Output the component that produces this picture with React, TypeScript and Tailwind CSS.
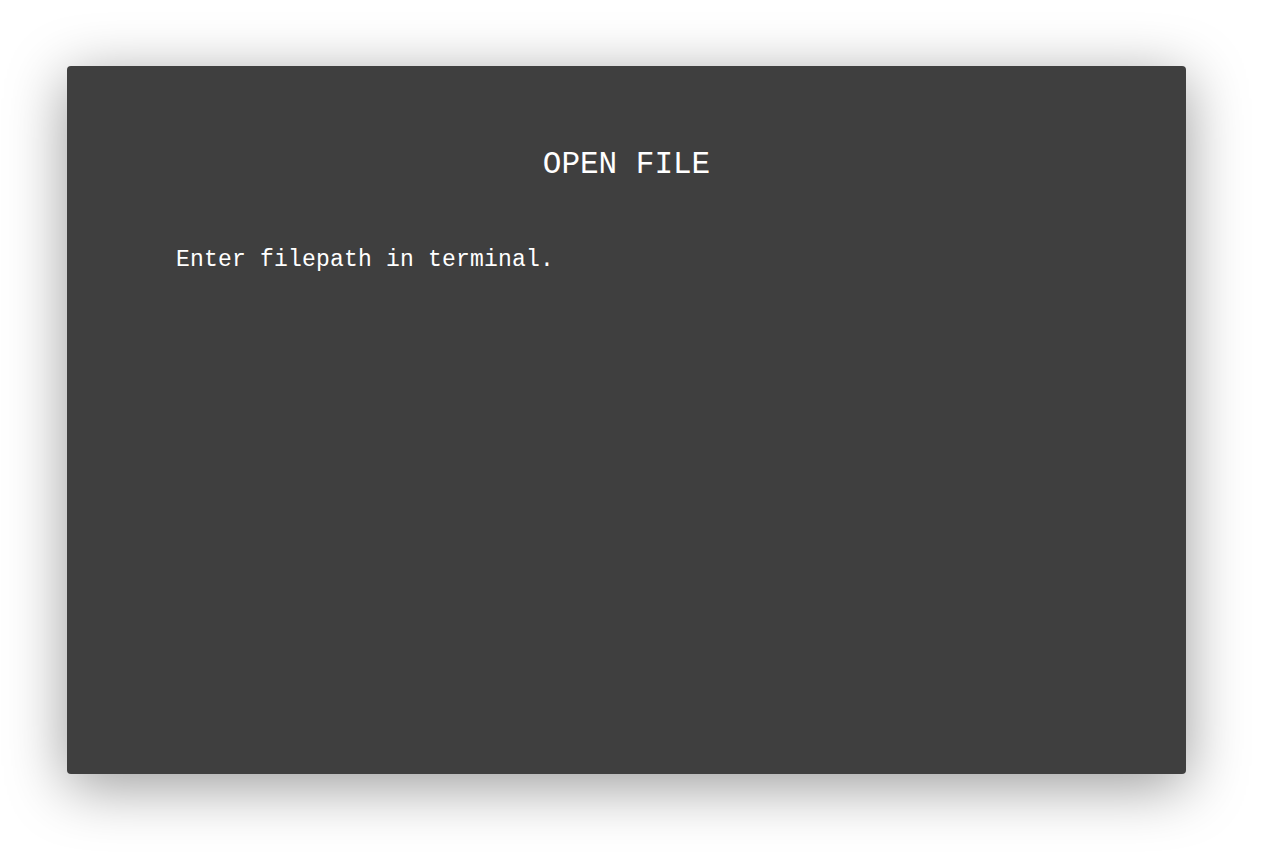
export default function App() {
  return (
    <div className="min-h-[857px] w-full bg-white pt-[66px] pl-[67px]">
      <div className="w-[1119px] h-[708px] rounded-[4px] bg-[#3f3f3f] shadow-[0_12px_60px_rgba(0,0,0,0.4)] text-white [font-family:'Liberation_Mono',monospace]">
        <h1 className="pt-[79px] text-center text-[31px] leading-[40px]">OPEN FILE</h1>
        <p className="mt-[60px] pl-[109px] text-[23px] leading-[30px] tracking-[0.2px]">Enter filepath in terminal.</p>
      </div>
    </div>
  );
}
